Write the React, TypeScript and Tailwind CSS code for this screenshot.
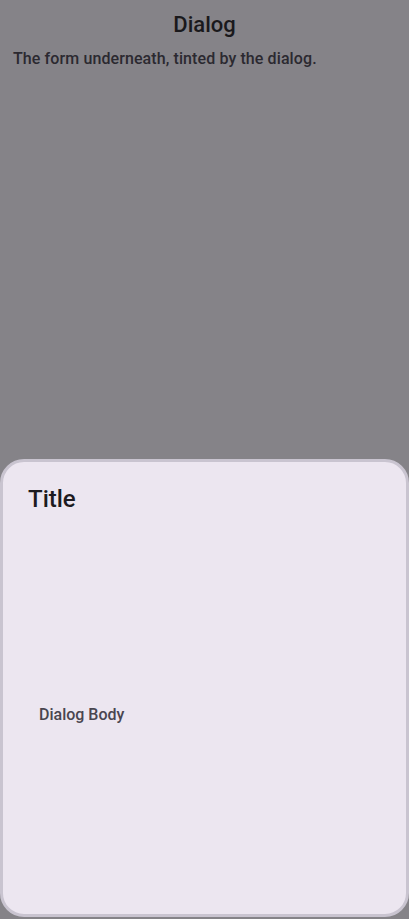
export default function App() {
  return (
    <main
      className="flex h-[919px] w-full flex-col bg-[#858388] text-[#1d1b20]"
      style={{ fontFamily: "Roboto, 'Noto Sans', sans-serif" }}
    >
      <header className="flex h-[49px] items-center justify-center pt-[1px]">
        <h1 className="text-[22px] font-medium leading-7 text-[#1a191c]">Dialog</h1>
      </header>
      <p className="px-[13px] text-[16px] font-medium leading-5 tracking-[0.1px] text-[#2b2930]">
        The form underneath, tinted by the dialog.
      </p>

      <div className="mt-auto mb-[2px] flex h-[458px] flex-col rounded-[24px] border-[3px] border-[#c9c4d0] bg-[#ece6f0]">
        <h2 className="px-[25px] pt-[21px] text-[24px] font-medium leading-8 text-[#1d1b20]">Title</h2>
        <div className="flex flex-1 items-center px-[36px]">
          <span className="text-[16px] font-medium text-[#49454f]">Dialog Body</span>
        </div>
      </div>
    </main>
  );
}
